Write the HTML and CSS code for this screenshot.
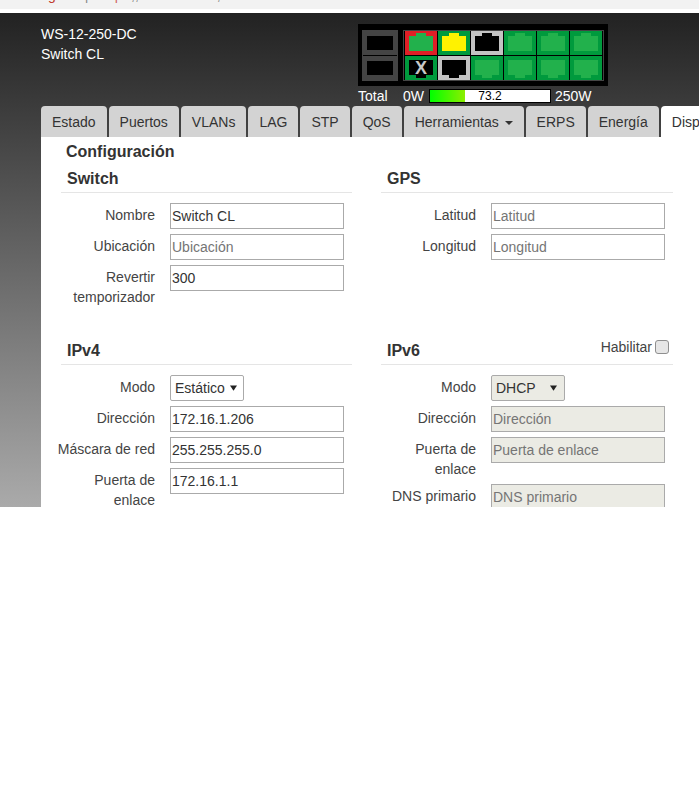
FILE: index.html
```html
<!DOCTYPE html>
<html lang="es">
<head>
<meta charset="utf-8">
<title>Switch CL</title>
<link rel="stylesheet" href="styles.css">
</head>
<body>
<svg class="defs" width="0" height="0" aria-hidden="true">
  <symbol id="up" viewBox="0 0 32 24"><path d="M4 5H11V2H21V5H28V20H4Z"/></symbol>
  <symbol id="down" viewBox="0 0 32 24"><path d="M4 4H28V19H21V22H11V19H4Z"/></symbol>
</svg>
<div class="browser-strip">
  <span class="frag frag-g">g</span>
  <span class="frag frag-a">|</span>
  <span class="frag frag-b">|</span>
  <span class="frag frag-c">,,</span>
  <span class="frag frag-d">,</span>
</div>
<main class="app">
  <header class="head">
    <div class="device">
      <div>WS-12-250-DC</div>
      <div>Switch CL</div>
    </div>
    <div class="status">
      <div class="panel">
        <div class="group group-sfp">
          <div class="sfp"></div>
          <div class="sfp"></div>
        </div>
        <div class="group group-ports">
          <svg class="port red"><use href="#up"/></svg>
          <svg class="port yellow"><use href="#up"/></svg>
          <svg class="port gray"><use href="#up"/></svg>
          <svg class="port"><use href="#up"/></svg>
          <svg class="port"><use href="#up"/></svg>
          <svg class="port"><use href="#up"/></svg>
          <svg class="port off" viewBox="0 0 32 24"><use href="#down"/><text class="port-x" x="16" y="18">X</text></svg>
          <svg class="port gray"><use href="#down"/></svg>
          <svg class="port"><use href="#down"/></svg>
          <svg class="port"><use href="#down"/></svg>
          <svg class="port"><use href="#down"/></svg>
          <svg class="port"><use href="#down"/></svg>
        </div>
      </div>
      <div class="power">
        <span class="power-total">Total</span>
        <span class="power-min">0W</span>
        <div class="meter"><div class="meter-fill" style="width:29.5%"></div><span class="meter-val">73.2</span></div>
        <span class="power-max">250W</span>
      </div>
    </div>
  </header>
  <nav class="tabs">
    <a class="tab">Estado</a>
    <a class="tab">Puertos</a>
    <a class="tab">VLANs</a>
    <a class="tab">LAG</a>
    <a class="tab">STP</a>
    <a class="tab">QoS</a>
    <a class="tab">Herramientas <span class="caret"></span></a>
    <a class="tab">ERPS</a>
    <a class="tab">Energía</a>
    <a class="tab active">Dispositivo</a>
  </nav>
  <section class="content">
    <h1 class="title">Configuración</h1>
    <div class="columns">
      <div class="col">
        <h2 class="sec-head"><span>Switch</span></h2>
        <div class="row"><label class="lbl">Nombre</label><input class="field" value="Switch CL"></div>
        <div class="row"><label class="lbl">Ubicación</label><input class="field" placeholder="Ubicación"></div>
        <div class="row"><label class="lbl">Revertir temporizador</label><input class="field" value="300"></div>
      </div>
      <div class="col col-right">
        <h2 class="sec-head"><span>GPS</span></h2>
        <div class="row"><label class="lbl">Latitud</label><input class="field" placeholder="Latitud"></div>
        <div class="row"><label class="lbl">Longitud</label><input class="field" placeholder="Longitud"></div>
      </div>
      <div class="col col-lower">
        <h2 class="sec-head"><span>IPv4</span></h2>
        <div class="row"><label class="lbl">Modo</label><div class="select">Estático<svg class="arrow" viewBox="0 0 8 6"><path d="M0 0H8L4 6Z"/></svg></div></div>
        <div class="row"><label class="lbl">Dirección</label><input class="field" value="172.16.1.206"></div>
        <div class="row"><label class="lbl">Máscara de red</label><input class="field" value="255.255.255.0"></div>
        <div class="row"><label class="lbl">Puerta de enlace</label><input class="field" value="172.16.1.1"></div>
      </div>
      <div class="col col-right col-lower">
        <h2 class="sec-head"><span>IPv6</span><label class="enable">Habilitar<input class="check" type="checkbox"></label></h2>
        <div class="row"><label class="lbl">Modo</label><div class="select select-off">DHCP<svg class="arrow" viewBox="0 0 8 6"><path d="M0 0H8L4 6Z"/></svg></div></div>
        <div class="row"><label class="lbl">Dirección</label><input class="field" placeholder="Dirección" disabled></div>
        <div class="row"><label class="lbl">Puerta de enlace</label><input class="field" placeholder="Puerta de enlace" disabled></div>
        <div class="row"><label class="lbl">DNS primario</label><input class="field" placeholder="DNS primario" disabled></div>
      </div>
    </div>
  </section>
</main>
</body>
</html>
```
FILE: styles.css
```css
* { box-sizing: border-box; }
html, body { margin: 0; padding: 0; background: #fff; }
body {
  font-family: "Liberation Sans", Arial, sans-serif;
  font-size: 14px;
  line-height: 20px;
  color: #333;
  overflow: hidden;
}
.defs { position: absolute; }

.browser-strip {
  display: flex;
  height: 13px;
  background: linear-gradient(#f2f2f2 9px, #fff 9px);
  overflow: hidden;
  color: #888;
  padding-left: 48px;
}
.frag { margin-top: -15px; height: 20px; }
.frag-g { color: #c0392b; }
.frag-a { margin-left: 29px; }
.frag-b { margin-left: 26px; color: #d06060; }
.frag-c { margin-left: 13px; }
.frag-d { margin-left: 78px; }

.app {
  height: 494px;
  overflow: hidden;
  background: linear-gradient(#222, #aaa);
}
.head {
  display: flex;
  height: 93px;
  padding-top: 11px;
  padding-left: 41px;
  color: #fff;
}
.device { width: 317px; }
.status { width: 250px; display: flex; flex-direction: column; }

.panel {
  display: flex;
  gap: 5px;
  height: 62px;
  padding: 6px 4px 5px;
  background: #000;
}
.group { border: 1px solid #444; display: grid; align-content: start; }
.group-sfp { grid-template-columns: 34px; gap: 1px 0; }
.group-ports {
  grid-template-columns: repeat(6, 32px);
  gap: 1px;
  padding: 0 1px;
}
.sfp { height: 24px; border: 5px solid #444; border-left-width: 4px; border-right-width: 4px; background: #000; }
.port { display: block; width: 32px; height: 24px; background: #009a3d; fill: #22b14c; }
.port.red { background: #e01f26; }
.port.yellow { fill: #fff200; }
.port.gray { background: #c3c3c3; fill: #000; }
.port.off { fill: #000; }
.port-x {
  fill: #c8c8c8;
  font-family: "Liberation Sans", Arial, sans-serif;
  font-size: 18px;
  font-weight: 700;
  text-anchor: middle;
}

.power {
  display: flex;
  align-items: center;
  height: 14px;
  margin-top: 3px;
}
.power-total { width: 45px; }
.power-min { width: 26px; }
.meter {
  position: relative;
  width: 122px;
  height: 14px;
  border: 1px solid #000;
  background: #fff;
}
.meter-fill { height: 100%; background: linear-gradient(90deg, #00ff00, #8cee00); }
.meter-val {
  position: absolute;
  inset: 0;
  text-align: center;
  color: #000;
  font-size: 12px;
  line-height: 12px;
}
.power-max { margin-left: 4px; }

.tabs {
  display: flex;
  gap: 2px;
  padding-left: 41px;
  width: 900px;
}
.tab {
  flex: none;
  height: 31px;
  padding: 6px 11px 5px;
  background: #d3d3d3;
  border-radius: 4px 4px 0 0;
  color: #333;
}
.tab.active { background: #fff; }
.caret {
  display: inline-block;
  width: 0;
  height: 0;
  margin-left: 2px;
  vertical-align: middle;
  border-top: 4px solid #333;
  border-left: 4px solid transparent;
  border-right: 4px solid transparent;
}

.content {
  margin-left: 41px;
  height: 400px;
  padding: 5px 0 0 20px;
  background: #fff;
}
.title {
  margin: 0 0 7px 5px;
  font-size: 16px;
  line-height: 20px;
  font-weight: 700;
  color: #333;
}
.columns {
  display: grid;
  grid-template-columns: 291px 292px;
  grid-template-rows: 139px auto;
  column-gap: 29px;
}
.col-lower { margin-top: 33px; }
.sec-head {
  display: flex;
  justify-content: space-between;
  align-items: flex-start;
  height: 24px;
  margin: 0 0 10px;
  padding: 0 4px 0 6px;
  border-bottom: 1px solid #e5e5e5;
  font-size: 16px;
  line-height: 20px;
  font-weight: 700;
}
.enable {
  display: flex;
  align-items: center;
  gap: 3px;
  height: 14px;
  margin-top: -1px;
  font-size: 14px;
  font-weight: 400;
  line-height: 14px;
  color: #444;
}
.check {
  appearance: none;
  margin: 0;
  width: 14px;
  height: 14px;
  border: 1px solid #8f8f8f;
  border-radius: 3px;
  background: #e6e6e6;
}
.row {
  display: flex;
  align-items: flex-start;
  margin-bottom: 5px;
  margin-left: -10px;
  gap: 15px;
}
.col-right .row { margin-left: -9px; }
.lbl {
  width: 104px;
  padding-top: 2px;
  text-align: right;
  color: #444;
}
.field {
  display: block;
  width: 174px;
  height: 26px;
  padding: 0 1px;
  border: 1px solid #aaa;
  border-radius: 0;
  outline: 0;
  background: #fff;
  color: #333;
  font: 14px/20px "Liberation Sans", Arial, sans-serif;
}
.field::placeholder { color: #757575; opacity: 1; }
.field:disabled { background: #ebebe4; }
.select {
  display: flex;
  align-items: center;
  justify-content: space-between;
  width: 74px;
  height: 26px;
  padding: 0 6px 0 4px;
  border: 1px solid #aaa;
  border-radius: 2px;
  background: #fff;
  color: #333;
}
.select-off { background: #ebebe4; padding-right: 7px; }
.arrow { width: 7px; height: 6px; fill: #222; }
```
